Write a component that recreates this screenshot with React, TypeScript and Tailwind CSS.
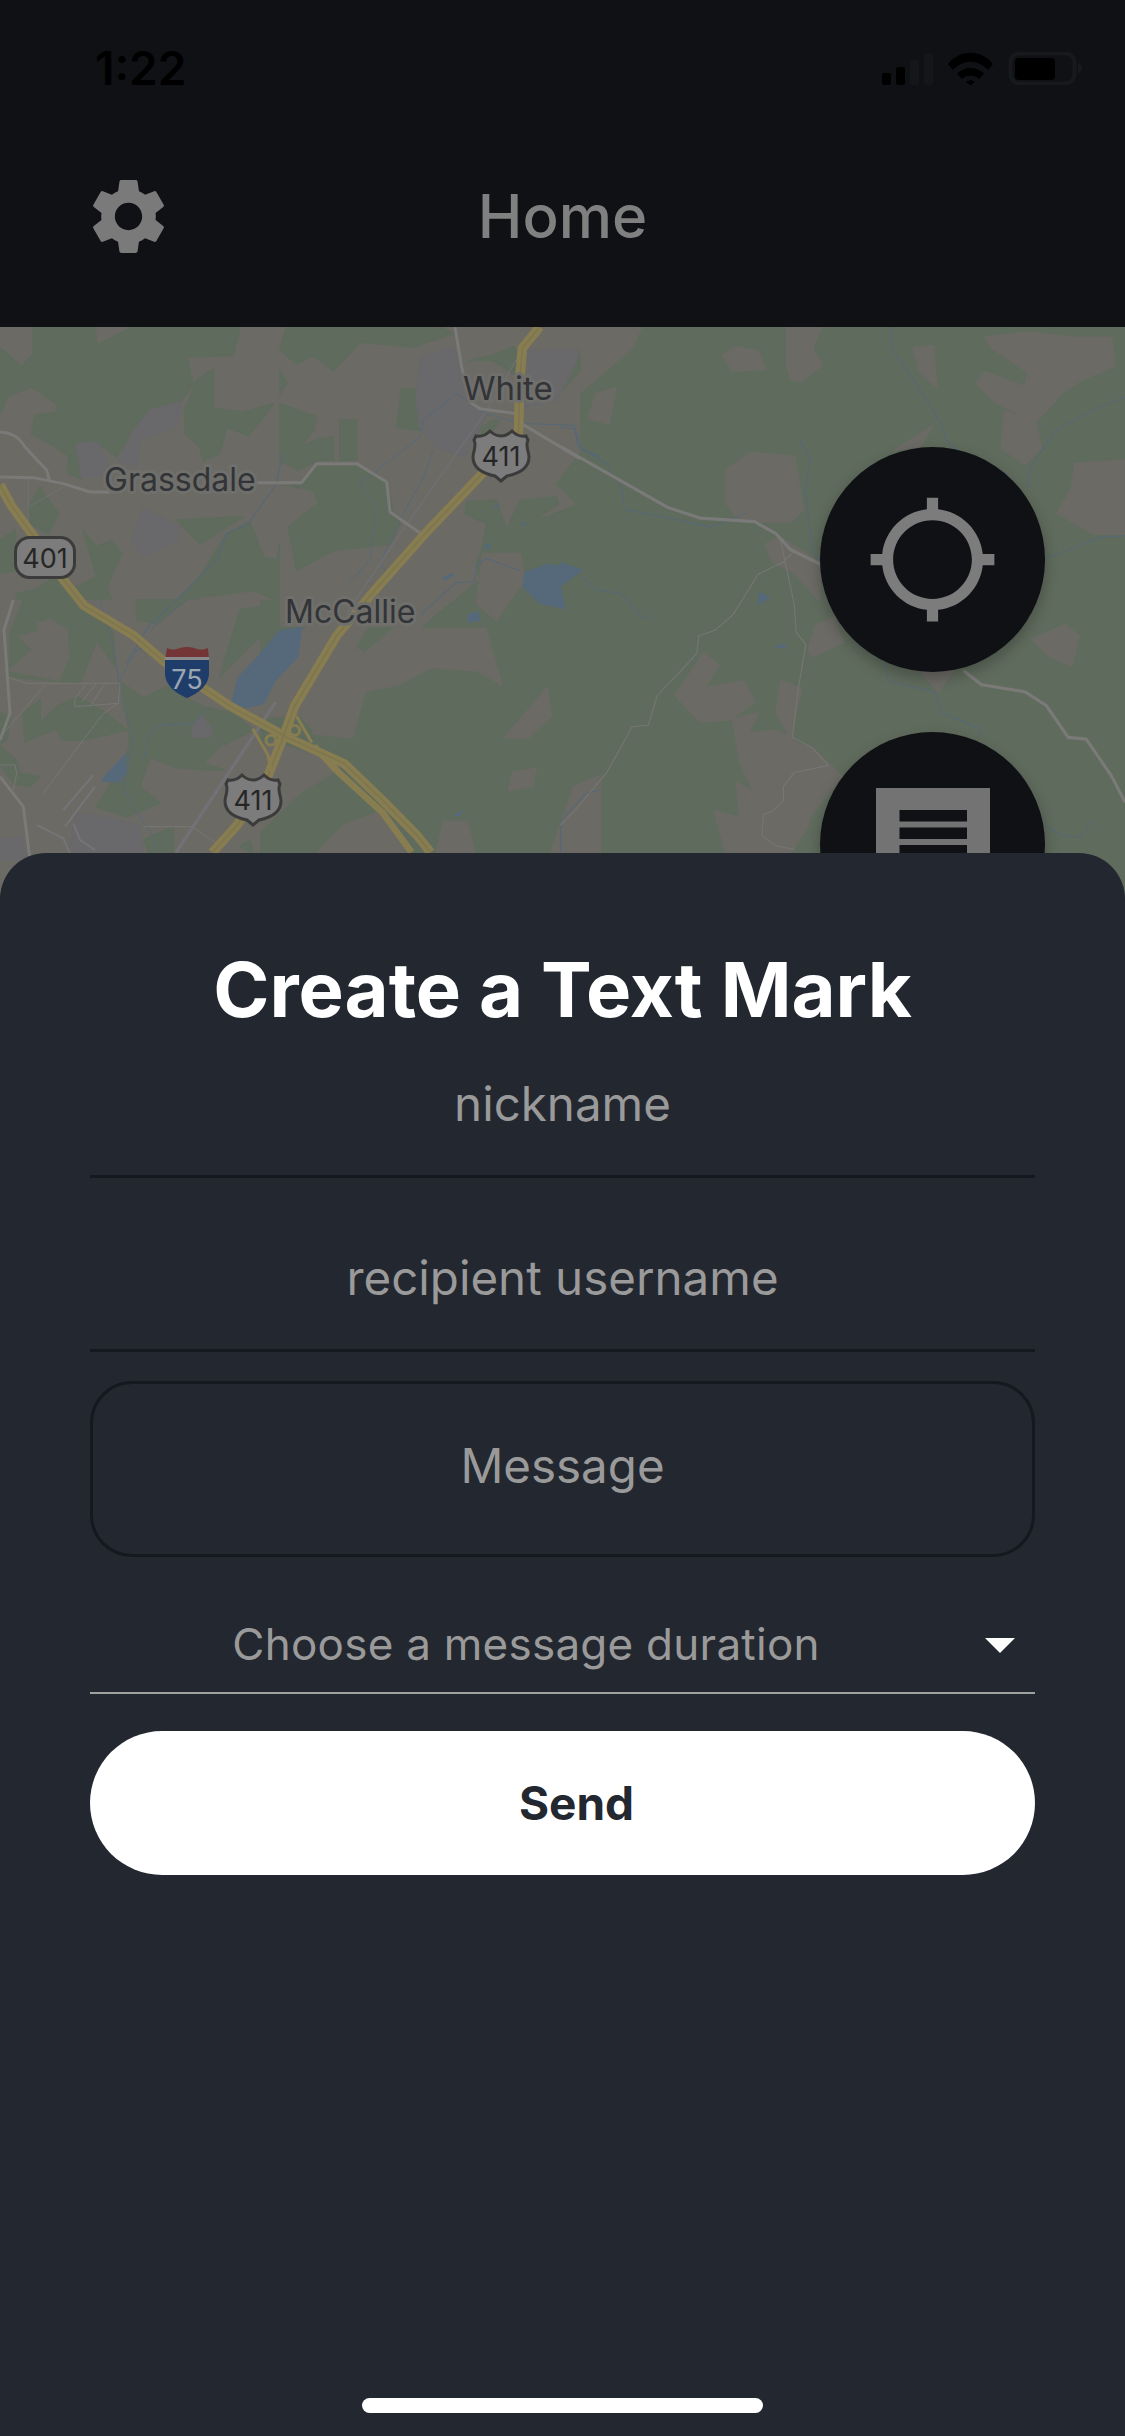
const BROWN = "#6c6a65";
const GREEN = "#5f6b5d";

// traced per map crop, so each list below has its own coordinate group
const MID_BROWN = [
  "900,1000 1030,880 1190,780 1250,810 1310,1040 1250,1000 1130,990 1040,1040 950,1060 880,1010",
  "800,1100 915,1000 960,1030 920,1190 820,1180",
  "1320,1190 1430,1050 1440,1130 1380,1190",
  "300,1518 400,1440 460,1300 640,1240 720,1200 760,1220 900,1270 780,1350 620,1518",
  "650,1130 700,1100 760,1080 800,1020 890,900 960,960 830,1060 820,1170 780,1120",
  "1140,1518 1160,1430 1220,1430 1240,1518",
  "830,1518 900,1440 1000,1400 1060,1518",
  "680,1000 860,820 1000,800 880,1020 800,1100 780,1130 650,1130",
  "1340,1290 1400,1280 1390,1330 1330,1340",
  "1440,1518 1500,1330 1568,1300 1568,1518",
];

const TOP_LEFT_GREEN = [
  "100,0 285,0 290,55 400,0 720,0 700,85 560,90 580,170 545,220 450,250 390,320 350,390 290,345 230,350 245,455 205,440 205,385 150,350 95,320 105,265 170,255 170,230 95,180 25,205 10,240 0,260 0,65 15,75 65,120 100,80",
  "555,245 590,160 640,125 640,245 730,255 820,230 780,285 745,325 680,300 660,380 610,400 600,360 555,320",
  "850,210 900,130 900,260 870,260",
  "85,540 120,480 175,560 145,620 90,590",
  "250,610 290,660 335,640 365,680 320,780 345,840 300,900 260,850 210,790 290,750",
  "490,860 600,750 680,620 750,585 790,690 830,700 840,650 885,700 870,600 900,580 900,850 760,790 600,810 515,870",
  "530,580 700,570 730,570 600,650",
  "0,640 45,610 50,730 0,740",
  "50,800 100,790 170,750 240,800 330,850 310,900 50,900",
];

const TOP_LEFT_GRAY = [
  "230,350 290,345 330,420 300,450 245,450",
  "395,320 450,250 545,225 530,300 420,340 410,420 360,400",
  "430,545 540,600 530,640 430,690 395,640",
];

const CENTER_GREEN = [
  "40,0 480,0 520,20 400,60 300,50 240,45 190,100 160,130 100,85 50,110 0,70 20,0",
  "0,130 20,170 0,200",
  "0,230 110,270 100,310 60,360 120,335 160,330 160,400 115,400 55,430 0,400",
  "180,280 230,280 230,400 180,400",
  "365,185 410,185 420,310 350,300",
  "0,470 70,470 110,420 240,420 320,470 340,560 360,590 330,650 260,660 160,670 50,730 25,600 115,530 100,490",
  "570,100 640,85 700,60 720,90 700,140 640,100",
  "830,210 900,130 900,70 780,80 800,130",
  "640,280 660,280 620,330 590,310",
  "900,380 900,540 830,470",
  "560,525 650,520 680,610 720,520 830,510 835,530 750,590 900,530 900,900 640,900 430,900 500,840 600,760 590,710 605,670 620,590 555,560",
];

const CENTER_BROWN = ["610,680 720,680 735,760 690,820 650,880 590,830"];

const CENTER_GRAY = [
  "410,220 420,90 520,60 560,170 590,240 620,260 550,390 470,360 420,300",
  "730,70 900,70 880,120 830,220 780,230 730,240 750,110",
];

const LOWER_LEFT_GREEN = [
  "30,100 70,0 230,0 300,50 340,100 345,200 290,120 240,250 30,230",
  "70,340 120,300 120,370 170,320 230,290 320,340 380,390 250,420 185,420 170,385 75,425",
  "360,245 430,295 500,260 610,320 700,340 760,390 660,440 610,490 670,510 620,510 520,500 450,470 420,560 480,610 380,650 290,620 340,540 390,440 380,340",
  "410,0 560,0 470,70 410,60",
  "720,30 780,20 780,110 660,230",
  "0,440 50,480 60,520 120,530 90,560 40,550 0,490",
  "0,340 30,350 20,420 0,430",
  "430,720 520,680 520,760 450,760",
  "720,740 750,720 760,760",
];

const LOWER_LEFT_BROWN = ["60,110 115,95 115,70 150,60 200,90 205,170 175,240 30,210 100,150"];

const LOWER_LEFT_GRAY = [
  "575,390 605,345 635,390 630,410 580,410",
  "230,640 350,660 420,680 430,780 200,780",
  "0,720 60,710 80,780 0,780",
];

const RIGHT_BROWN = [
  "450,100 490,78 550,90 570,140 480,145",
  "630,20 725,20 700,80 725,130 670,175 640,170 630,130",
  "0,20 225,20 200,80 130,140 50,210 0,250",
  "80,280 100,210 155,195 135,295",
  "460,430 530,378 650,390 675,540 640,575 500,575 460,520",
  "0,380 40,400 40,465 0,470",
  "1180,50 1300,35 1420,50 1530,50 1540,130 1450,170 1400,200 1320,290 1210,235 1155,180 1180,150 1290,190 1300,150 1200,80",
  "980,80 1035,75 1045,190 1000,150",
  "1235,260 1320,290 1335,365 1290,410 1225,365",
  "1430,410 1568,400 1568,610 1480,610 1380,550 1420,480",
  "930,370 1030,305 1000,360",
  "570,640 610,620 720,690 720,800 650,720 590,690",
  "710,870 760,850 785,920 700,960 690,940",
  "1000,1000 1090,1000 1050,1060",
  "1310,910 1400,870 1440,900 1420,985 1360,960",
  "320,1070 400,950 440,985 400,1050 510,1030 540,1090 470,1140 390,1145",
  "480,1140 550,1120 520,1180 600,1170 640,1190 660,1210 700,1220 780,1300 690,1420 690,1440 640,1518 460,1518 430,1400 500,1420 490,1320 540,1350 500,1260",
  "615,1030 670,1050 640,1190 600,1120",
];

const MID_WATER = [
  "790,875 780,960 720,1030 690,1095 640,1108 605,1090 620,1020 680,950 730,885",
  "1370,720 1430,695 1525,712 1465,760 1478,825 1410,810 1365,760",
  "1222,840 1250,830 1255,858 1222,862",
  "265,1310 330,1235 330,1290 310,1320",
  "1155,735 1185,720 1185,730 1160,742",
  "1268,640 1282,635 1278,655 1266,655",
  "1290,530 1305,525 1295,540",
  "1360,578 1378,578 1368,588",
  "1185,1410 1212,1398 1198,1418",
];

const MID_STREAMS = [
  "M740 380 L720 470 L650 580 L590 610 L570 680 L470 790 L390 870 L330 980",
  "M1465 1518 L1465 1430 L1530 1350 L1568 1340",
  "M1100 840 L1190 750 L1240 745 L1245 700 L1270 680 L1360 715",
  "M1365 295 L1500 300 L1520 370 L1568 390",
];

const CENTER_STREAMS = [
  "M240 470 L290 540 L270 700 L205 770",
  "M240 470 L420 330 L430 280 L530 200 L620 260 L720 290",
  "M460 370 L430 450 L370 560 L300 710 L320 735",
];

const LOWER_LEFT_STREAMS = [
  "M300 0 L330 100 L350 190 L360 290 L400 420 L370 560 L400 620 L460 710 L465 750",
  "M440 140 L410 150 L360 240",
  "M430 480 L450 400 L480 375 L580 370 L620 325",
  "M450 90 L560 0",
];

const LOWER_LEFT_THIN = [
  "M20 230 L80 250 L360 250 L355 310 L310 340 L130 580",
  "M135 255 L10 400",
  "M260 250 L225 295 L225 320 L355 310",
  "M290 250 L245 305 M315 250 L270 320",
  "M0 495 L45 495 L50 520 L40 570",
  "M430 680 L575 680 L650 730",
];

const LOWER_LEFT_TRACKS = [
  "M190 630 L280 525",
  "M195 680 L285 560",
  "M110 675 L190 715 L210 760",
  "M220 670 L240 720 L285 750",
];

const RIGHT_ROADS = [
  "M0 360 L300 535 L390 565 L540 575 L600 610 L640 655 L723 697",
  "M1120 1000 L1170 1040 L1290 1060 L1350 1100 L1410 1190 L1460 1195 L1530 1300 L1568 1375",
];

const RIGHT_STREAMS = [
  "M0 305 L40 310 L50 360 L130 410 L170 480 L180 540 L280 560 L420 590 L520 550",
  "M920 20 L920 80 L980 170 L1025 240 L1060 300 L1070 340 L1130 400 L1240 440",
  "M665 340 L695 400 L680 480 L700 650 L725 700",
  "M60 730 L100 770 L170 780 L230 850 L260 850",
  "M1300 480 L1300 430 L1370 320 L1470 260 L1568 220",
  "M1350 680 L1500 620 L1568 615",
  "M900 980 L910 1030 L1040 1060 L1060 1120 L1165 1165 L1165 1190",
  "M1345 1440 L1390 1470 L1445 1475 L1475 1425",
];

const RIGHT_TRACKS = [
  "M0 1440 L40 1400 L130 1290 L200 1160 L245 1155 L270 1070 L345 990 L380 950 L385 900 L430 885 L480 840 L550 725 L620 690 L650 660",
  "M610 620 L650 810 L655 890 L682 925 L660 1060 L645 1190 L700 1220 L745 1270 L650 1290 L620 1330 L620 1370 L590 1400 L565 1410 L560 1470 L600 1500 L650 1510",
];

const HIGHWAYS = [
  "M0 470 L30 530 L90 620 L165 740 L220 815 L350 900 L430 975 L600 1100 L750 1190 L900 1265 L1000 1370 L1090 1470 L1125 1518",
  "M1410 20 L1365 80 L1358 170 L1355 320 L1250 450 L1110 610 L980 770 L880 900 L770 1100 L740 1190 L700 1300 L620 1440 L555 1518",
];

function Patches({ points, fill }: { points: string[]; fill: string }) {
  return (
    <>
      {points.map(p => (
        <polygon key={p} points={p} fill={fill} stroke={fill} strokeWidth="6" strokeLinejoin="round" />
      ))}
    </>
  );
}

function Lines({ paths, stroke, width }: { paths: string[]; stroke: string; width: number }) {
  return (
    <>
      {paths.map(d => (
        <path key={d} d={d} fill="none" stroke={stroke} strokeWidth={width} strokeLinejoin="round" />
      ))}
    </>
  );
}

function StatusIcons() {
  return (
    <svg width="200" height="33" viewBox="0 0 200 33" fill="none">
      <rect x="0" y="21" width="9" height="12" rx="2" fill="#000" />
      <rect x="14" y="15" width="9" height="18" rx="2" fill="#000" />
      <rect x="28" y="8" width="9" height="25" rx="2" fill="#14161a" />
      <rect x="42" y="1" width="9" height="32" rx="2" fill="#14161a" />
      <path
        d="M66 12 C78 -3 99 -3 111 12 L106 18 C96 7 81 7 71 18 Z M75 21.500 C82 14 95 14 102 21.500 L97 27 C93 22.500 84 22.500 80 27 Z M84 30 C86.500 27.500 90.500 27.500 93 30 L88.500 33.500 Z"
        fill="#000"
      />
      <rect x="128.500" y="1.500" width="64" height="30" rx="9" stroke="#17191d" strokeWidth="4" />
      <rect x="133" y="6" width="40" height="22" rx="4" fill="#000" />
      <path d="M196 11 C199 12.500 200 14.500 200 16.500 C200 18.500 199 20.500 196 22 Z" fill="#17191d" />
    </svg>
  );
}

function GearIcon() {
  return (
    <svg width="91" height="91" viewBox="0 0 24 24" fill="#7a7a7a">
      <path d="M19.14,12.94c0.04-0.3,0.06-0.61,0.06-0.94c0-0.32-0.02-0.64-0.07-0.94l2.03-1.58c0.18-0.14,0.23-0.41,0.12-0.61 l-1.92-3.32c-0.12-0.22-0.37-0.29-0.59-0.22l-2.39,0.96c-0.5-0.38-1.03-0.7-1.62-0.94L14.4,2.81c-0.04-0.24-0.24-0.41-0.48-0.41 h-3.84c-0.24,0-0.43,0.17-0.47,0.41L9.25,5.35C8.66,5.59,8.12,5.92,7.63,6.29L5.24,5.33c-0.22-0.08-0.47,0-0.59,0.22L2.74,8.87 C2.62,9.08,2.66,9.34,2.86,9.48l2.03,1.58C4.84,11.36,4.8,11.69,4.8,12s0.02,0.64,0.07,0.94l-2.03,1.58 c-0.18,0.14-0.23,0.41-0.12,0.61l1.92,3.32c0.12,0.22,0.37,0.29,0.59,0.22l2.39-0.96c0.5,0.38,1.03,0.7,1.62,0.94l0.36,2.54 c0.05,0.24,0.24,0.41,0.48,0.41h3.84c0.24,0,0.44-0.17,0.47-0.41l0.36-2.54c0.59-0.24,1.13-0.56,1.62-0.94l2.39,0.96 c0.22,0.08,0.47,0,0.59-0.22l1.92-3.32c0.12-0.22,0.07-0.47-0.12-0.61L19.14,12.94z M12,15.6c-1.98,0-3.6-1.62-3.6-3.6 s1.62-3.6,3.6-3.6s3.6,1.62,3.6,3.6S13.98,15.6,12,15.6z" />
    </svg>
  );
}

function Shield({ x, y, label }: { x: number; y: number; label: string }) {
  return (
    <g transform={`translate(${x} ${y})`}>
      <path
        d="M4 6 C9 7 14 5 18 1 C21 4 25 6 29 6 C33 6 37 4 40 1 C44 5 49 7 54 6 L56 10 C53 16 57 22 57 27 C57 39 45 44 35 46 L29 51 L23 46 C13 44 1 39 1 27 C1 22 5 16 2 10 Z"
        fill="#7c7c7c"
        stroke="#3b3b3b"
        strokeWidth="3"
      />
      <text x="29" y="36" textAnchor="middle" fontSize="27" fill="#262626">
        {label}
      </text>
    </g>
  );
}

function MapLabel({ x, y, size, children }: { x: number; y: number; size: number; children: string }) {
  return (
    <text x={x} y={y} fontSize={size} fill="#333437" stroke="#6f6f6c" strokeWidth="6" paintOrder="stroke" strokeLinejoin="round">
      {children}
    </text>
  );
}

function MapBackground() {
  return (
    <svg className="absolute inset-0" width="1125" height="572" viewBox="0 327 1125 572" style={{ fontFamily: "Inter, sans-serif" }}>
      <rect x="0" y="327" width="1125" height="572" fill={GREEN} />
      <g transform="translate(0 320) scale(0.3827 0.3507)">
        <Patches points={MID_BROWN} fill={BROWN} />
      </g>
      <g transform="translate(560 320) scale(0.3604 0.3507)">
        <Patches points={RIGHT_BROWN} fill={BROWN} />
      </g>

      {/* top left */}
      <rect x="0" y="327" width="300" height="273" fill={BROWN} />
      <g transform="translate(0 327) scale(0.3333)">
        <Patches points={TOP_LEFT_GREEN} fill={GREEN} />
        <Patches points={TOP_LEFT_GRAY} fill="#69686a" />
      </g>

      {/* center */}
      <rect x="280" y="327" width="300" height="300" fill={BROWN} />
      <g transform="translate(280 327) scale(0.3333)">
        <Patches points={CENTER_GREEN} fill={GREEN} />
        <Patches points={CENTER_BROWN} fill={BROWN} />
        <Patches points={CENTER_GRAY} fill="#69686a" />
      </g>

      {/* lower left */}
      <rect x="0" y="600" width="260" height="299" fill={BROWN} />
      <g transform="translate(0 600) scale(0.3333)">
        <Patches points={LOWER_LEFT_GREEN} fill={GREEN} />
        <Patches points={LOWER_LEFT_BROWN} fill={BROWN} />
        <Patches points={LOWER_LEFT_GRAY} fill="#69686a" />
        <polygon points="305,545 325,510 360,545" fill="#55697a" />
        <polygon points="335,505 380,460 365,525" fill="#55697a" />
        <Lines paths={LOWER_LEFT_STREAMS} stroke="#566877" width={3} />
        <Lines paths={LOWER_LEFT_THIN} stroke="#767674" width={3} />
        <Lines paths={LOWER_LEFT_TRACKS} stroke="#757578" width={6} />
        <Lines paths={["M40 0 L12 90 L30 340 L0 420", "M0 530 L70 620 L90 780"]} stroke="#7a7a78" width={9} />
      </g>

      <g transform="translate(0 320) scale(0.3827 0.3507)">
        {MID_WATER.map(p => <polygon key={p} points={p} fill="#55697a" />)}
        <Lines paths={MID_STREAMS} stroke="#566877" width={3} />
        <path d="M720 1090 L460 1518" fill="none" stroke="#727276" strokeWidth="9" />
      </g>

      <g transform="translate(280 327) scale(0.3333)">
        <Lines paths={CENTER_STREAMS} stroke="#566877" width={3} />
        <path d="M720 80 L620 250 L340 650 L200 860" fill="none" stroke="#707074" strokeWidth="4" />
        <Lines paths={["M525 0 L545 120 L570 225 L600 245 L710 260", "M725 290 L900 395"]} stroke="#7a7a78" width={9} />
        <Lines paths={["M0 467 L65 467 L110 410 L230 410 L320 465 L330 555 L430 625"]} stroke="#7a7a78" width={9} />
      </g>

      <g transform="translate(0 327) scale(0.3333)">
        <Lines paths={["M0 315 C30 318 55 325 75 360 L140 430 L150 465", "M0 450 L100 452 L190 470 L270 495 L330 495", "M760 467 L900 467"]} stroke="#7a7a78" width={9} />
        <Lines paths={["M85 460 L85 590 L105 620", "M85 540 L190 480"]} stroke="#767674" width={2} />
      </g>

      <g transform="translate(0 320) scale(0.3827 0.3507)">
        <Lines paths={HIGHWAYS} stroke="#887d50" width={25} />
        <Lines paths={["M820 1215 L880 1285 L1000 1405 L1075 1518"]} stroke="#887d50" width={18} />
        <Lines paths={HIGHWAYS} stroke="#7b7650" width={4} />
        <g fill="none" stroke="#887d50" strokeWidth="8">
          <path d="M660 1165 L700 1240 L710 1290" />
          <path d="M775 1130 L815 1205" />
          <ellipse cx="708" cy="1198" rx="13" ry="14" />
          <ellipse cx="770" cy="1170" rx="13" ry="14" />
        </g>
      </g>

      <g transform="translate(560 320) scale(0.3604 0.3507)">
        <polygon points="0,690 65,712 20,745 0,750" fill="#55697a" />
        <polygon points="550,775 585,790 550,815" fill="#55697a" />
        <polygon points="590,932 625,922 628,938" fill="#55697a" />
        <Lines paths={RIGHT_STREAMS} stroke="#566877" width={3} />
        <Lines paths={RIGHT_TRACKS} stroke="#767674" width={3} />
        <Lines paths={RIGHT_ROADS} stroke="#7a7a78" width={9} />
      </g>

      <MapLabel x={463} y={400} size={33}>White</MapLabel>
      <MapLabel x={104} y={491} size={32}>Grassdale</MapLabel>
      <MapLabel x={285} y={623} size={32}>McCallie</MapLabel>

      <Shield x={472} y={430} label="411" />
      <Shield x={224} y={774} label="411" />

      <rect x="15.500" y="537.500" width="59" height="40" rx="14" fill="#7c7c7c" stroke="#3b3b3b" strokeWidth="3" />
      <text x="45" y="568" textAnchor="middle" fontSize="27" fill="#262626">401</text>

      <path d="M167 648 C175 652 178 647 187 647 C196 647 199 652 208 648 L209 660 L165 660 Z" fill="#733536" />
      <rect x="165" y="657" width="44" height="3" fill="#8a8a8a" />
      <path d="M165 660 L209 660 L209 673 C209 686 197 694 187 698 C177 694 165 686 165 673 Z" fill="#1f3d6b" />
      <text x="187" y="689" textAnchor="middle" fontSize="27" fill="#9aa6b0">75</text>
    </svg>
  );
}

function Fab({ top, children }: { top: string; children: React.ReactNode }) {
  return (
    <div className={`absolute right-[80px] ${top} flex h-[225px] w-[225px] items-center justify-center rounded-full bg-[#0f1115] shadow-[0_6px_14px_rgba(0,0,0,0.25)]`}>
      {children}
    </div>
  );
}

export default function App() {
  return (
    <div className="flex h-[2436px] w-[1125px] flex-col overflow-hidden bg-[#232730] font-['Inter',sans-serif]">
      <header className="h-[327px] shrink-0 overflow-hidden bg-[#0f1115] pt-[52px]">
        <div className="flex h-[33px] items-center justify-between pl-[95px] pr-[43px]">
          <span className="text-[46px] font-semibold leading-[33px] text-black">1:22</span>
          <StatusIcons />
        </div>
        <div className="mt-[86px] flex h-[91px] items-center justify-between px-[83px]">
          <GearIcon />
          <h1 className="pb-[2px] text-[60px] font-medium leading-none text-[#808080]">Home</h1>
          <div className="w-[91px]" />
        </div>
      </header>

      <div className="relative h-[572px] shrink-0 overflow-hidden">
        <MapBackground />
        <Fab top="top-[120px]">
          <svg width="135" height="135" viewBox="0 0 24 24" fill="#7c7c7c">
            <path d="M20.94 11c-.46-4.17-3.77-7.48-7.94-7.94V1h-2v2.06C6.83 3.52 3.52 6.83 3.06 11H1v2h2.06c.46 4.17 3.77 7.48 7.94 7.94V23h2v-2.06c4.17-.46 7.48-3.77 7.94-7.94H23v-2h-2.06zM12 19c-3.87 0-7-3.13-7-7s3.13-7 7-7 7 3.13 7 7-3.13 7-7 7z" />
          </svg>
        </Fab>
        <Fab top="top-[405px]">
          <svg width="114" height="113" viewBox="0 0 114 113" fill="#0f1115">
            <rect width="114" height="113" fill="#737373" />
            <rect x="23.500" y="22" width="67.500" height="11.500" />
            <rect x="23.500" y="39.500" width="67.500" height="11.500" />
            <rect x="23.500" y="57" width="67.500" height="11.500" />
          </svg>
        </Fab>
      </div>

      <main className="relative -mt-[46px] flex flex-1 flex-col rounded-t-[46px] bg-[#232730] px-[90px] pt-[92px]">
        <h2 className="text-center text-[76px] font-bold leading-[88px] text-white">Create a Text Mark</h2>

        <div className="h-[145px] border-b-[3px] border-[#15181e] pt-[41px] text-center text-[47.500px] leading-[60px] text-[#9a9a9a]">
          nickname
        </div>
        <div className="h-[174px] border-b-[3px] border-[#15181e] pt-[70px] text-center text-[47.500px] leading-[60px] text-[#9a9a9a]">
          recipient username
        </div>

        <div className="mt-[29px] flex h-[176px] items-center justify-center rounded-[42px] border-[3px] border-[#15181e] pb-[7px] text-[47.500px] leading-[60px] text-[#9a9a9a]">
          Message
        </div>

        <div className="mt-[38px] flex h-[99px] items-center border-b-2 border-[#a0a0a0]">
          <span className="flex-1 text-center text-[44px] leading-[60px] tracking-[0.25px] text-[#9a9a9a]">Choose a message duration</span>
          <span className="mt-[3px] ml-[23px] mr-[20px] h-0 w-0 border-x-[15.500px] border-t-[15px] border-x-transparent border-t-white" />
        </div>

        <button className="mt-[37px] h-[144px] rounded-full bg-white pl-[28px] text-[46px] font-bold leading-none text-[#232730]">
          Send
        </button>

        <div className="mx-auto mt-auto mb-[23px] h-[15px] w-[401px] rounded-full bg-white" />
      </main>
    </div>
  );
}
